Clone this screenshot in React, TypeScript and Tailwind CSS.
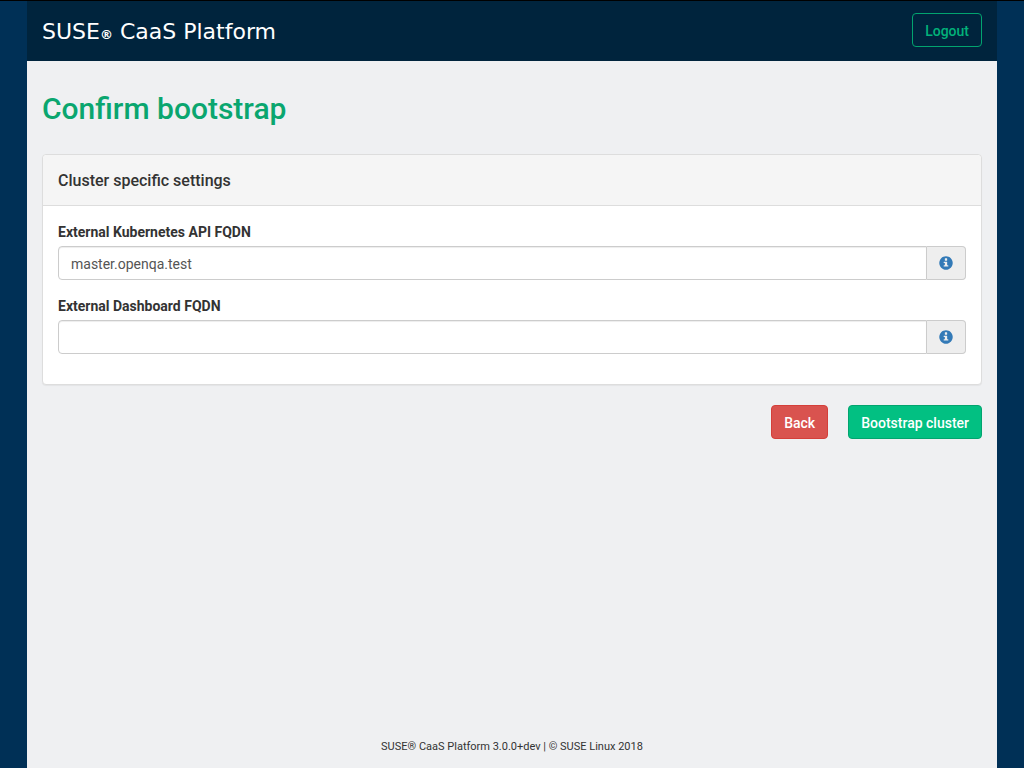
import { useState } from "react";

type FieldProps = {
  id: string;
  label: string;
  initialValue: string;
};

function InfoIcon() {
  return (
    <svg viewBox="0 0 1200 1200" className="h-[14px] w-[14px]" fill="currentColor" aria-hidden="true">
      <path
        transform="matrix(1 0 0 -1 0 1200)"
        d="M600 1177q117 0 224-45.5t184.5-123t123-184.5t45.5-224t-45.5-224t-123-184.5t-184.5-123t-224-45.5t-224 45.5t-184.5 123t-123 184.5t-45.5 224t45.5 224t123 184.5t184.5 123t224 45.5zM675 1000h-150q-10 0-17.5-7.5t-7.5-17.5v-150q0-10 7.5-17.5t17.5-7.5h150q10 0 17.5 7.5t7.5 17.5v150q0 10-7.5 17.5t-17.5 7.5zM675 700h-250q-10 0-17.5-7.5t-7.5-17.5v-50q0-10 7.5-17.5t17.5-7.5h75v-200h-75q-10 0-17.5-7.5t-7.5-17.5v-50q0-10 7.5-17.5t17.5-7.5h350q10 0 17.5 7.5t7.5 17.5v50q0 10-7.5 17.5t-17.5 7.5h-75v275q0 10-7.5 17.5t-17.5 7.5z"
      />
    </svg>
  );
}

function FqdnField({ id, label, initialValue }: FieldProps) {
  const [value, setValue] = useState(initialValue);

  return (
    <div className="mb-4">
      <label htmlFor={id} className="mb-1 block font-bold">
        {label}
      </label>
      <div className="flex h-[34px]">
        <input
          id={id}
          type="text"
          value={value}
          onChange={(event) => setValue(event.target.value)}
          className="min-w-0 flex-1 rounded-l border border-[#ccc] bg-white px-3 pt-[2px] text-[#555] shadow-[inset_0_1px_1px_rgba(0,0,0,0.075)] outline-none focus:border-[#66afe9]"
        />
        <button
          type="button"
          aria-label={`About ${label}`}
          className="flex w-[39px] items-center justify-center rounded-r border border-l-0 border-[#ccc] bg-[#eee] text-[#337ab7]"
        >
          <InfoIcon />
        </button>
      </div>
    </div>
  );
}

export default function App() {
  return (
    <div className="flex min-h-screen justify-center border-t border-black bg-[#003056] font-['Roboto',sans-serif] text-[14px] leading-[20px] text-[#333]">
      <div className="flex w-full max-w-[970px] flex-col bg-[#eff0f2]">
        <header className="flex h-[60px] items-start justify-between bg-[#00243d] px-[15px] pt-3">
          <a
            href="#"
            className="pt-1 font-['DejaVu_Sans',sans-serif] text-[22px] leading-[30px] text-white"
          >
            SUSE<span className="text-[13px] font-bold">®</span> CaaS Platform
          </a>
          <button
            type="button"
            className="h-[34px] rounded border border-[#02a46f] px-3 pt-[2px] font-medium text-[#02b27a]"
          >
            Logout
          </button>
        </header>

        <main className="flex-1 px-[15px] pt-[31px]">
          <h1 className="mb-[29px] text-[30px] leading-[33px] font-medium text-[#0aa66f]">
            Confirm bootstrap
          </h1>

          <form onSubmit={(event) => event.preventDefault()}>
            <section className="rounded border border-[#ddd] bg-white shadow-[0_1px_1px_rgba(0,0,0,0.05)]">
              <h2 className="rounded-t border-b border-[#ddd] bg-[#f5f5f5] px-[15px] pt-4 pb-[14px] text-[16px] font-medium">
                Cluster specific settings
              </h2>
              <div className="px-[15px] pt-4 pb-[14px]">
                <FqdnField
                  id="api-fqdn"
                  label="External Kubernetes API FQDN"
                  initialValue="master.openqa.test"
                />
                <FqdnField
                  id="dashboard-fqdn"
                  label="External Dashboard FQDN"
                  initialValue=""
                />
              </div>
            </section>

            <div className="mt-5 flex justify-end gap-5 font-medium text-white">
              <button
                type="button"
                className="h-[34px] rounded border border-[#d43f3a] bg-[#d9534f] px-3 pt-[2px]"
              >
                Back
              </button>
              <button
                type="submit"
                className="h-[34px] rounded border border-[#02a46f] bg-[#02c082] px-3 pt-[2px]"
              >
                Bootstrap cluster
              </button>
            </div>
          </form>
        </main>

        <footer className="pb-[11px] text-center text-[11px]">
          SUSE® CaaS Platform 3.0.0+dev | © SUSE Linux 2018
        </footer>
      </div>
    </div>
  );
}
